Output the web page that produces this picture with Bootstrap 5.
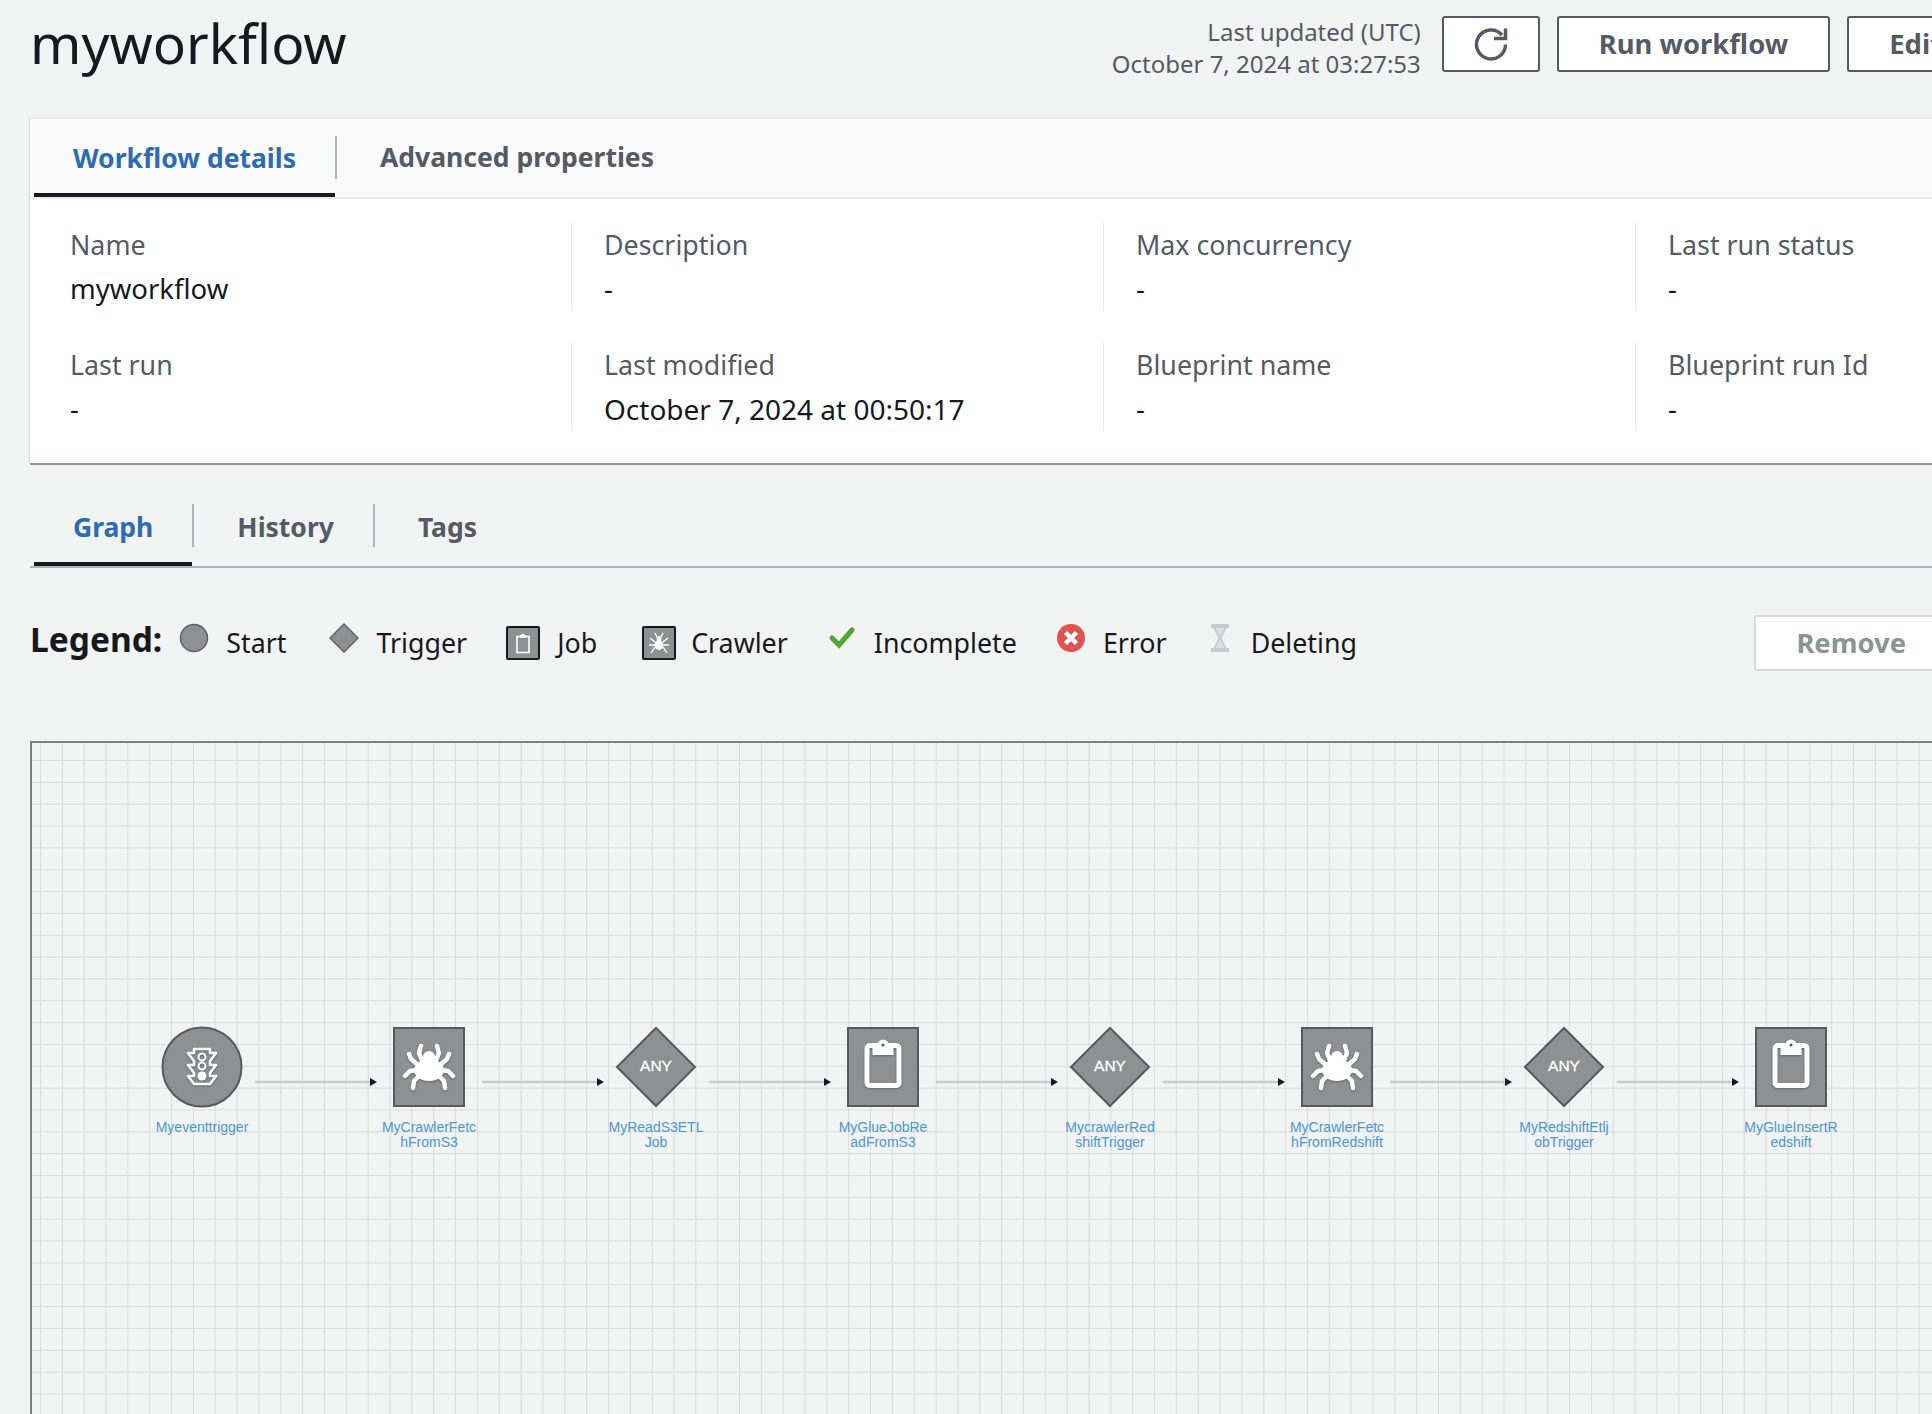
<!doctype html>
<html lang="en">
<head>
<meta charset="utf-8" />
<meta name="viewport" content="width=device-width, initial-scale=1" />
<title>myworkflow - Workflow details</title>
<link href="https://cdn.jsdelivr.net/npm/bootstrap@5.3.0/dist/css/bootstrap.min.css" rel="stylesheet" />
<style>
    html, body {
        height: 100%;
        overflow: hidden;
    }
    body {
        background: #f2f3f3;
        color: #16191f;
        font-family: "Noto Sans", sans-serif;
        font-size: 26.8px;
    }
    .wf-page {
        width: 2200px;
        padding-left: 30px;
    }
    .wf-head {
        width: 1954px;
        height: 118px;
        padding-top: 16px;
    }
    .wf-title {
        font-size: 55px;
        font-weight: 400;
        line-height: 58px;
        margin: -2px 0 0 0;
    }
    .wf-updated {
        color: #545b64;
        font-size: 24px;
        line-height: 32px;
        text-align: right;
        margin-right: 21px;
    }
    .wf-btn {
        height: 56px;
        background: #fff;
        border: 2px solid #545b64;
        border-radius: 3px;
        color: #545b64;
        font-size: 27.4px;
        font-weight: 700;
        padding: 0 40px;
        display: flex;
        align-items: center;
    }
    .wf-btn-next {
        margin-left: 17px;
    }
    .wf-btn-refresh {
        width: 98px;
        justify-content: center;
        padding: 0;
    }
    .wf-btn-off {
        border-color: #d5dbdb;
        color: #879596;
        margin: -4px 0 0 auto;
    }
    .wf-card {
        background: #fff;
        border-top: 1px solid #eaeded;
        box-shadow: 0 2px 0 #8d9a9b, -1px 0 1px #d5dbdb;
        height: 345px;
    }
    .wf-tabs {
        height: 80px;
        background: #fafafa;
        border-bottom: 2px solid #eaeded;
    }
    .wf-tabs-line {
        height: 81px;
        border-bottom: 2px solid #aab7b8;
    }
    .wf-tab {
        height: 100%;
        padding: 0 39px 1px 39px;
        margin-left: 4px;
        display: flex;
        align-items: center;
        color: #545b64;
        font-size: 26.5px;
        font-weight: 700;
    }
    .wf-tab + .wf-tab {
        margin-left: 2px;
        padding-left: 43px;
    }
    .wf-tab.is-active {
        color: #2b6cb4;
        border-bottom: 4px solid #16191f;
        padding-top: 5px;
        padding-bottom: 0;
    }
    .wf-tabs-line .wf-tab {
        padding-top: 4px;
    }
    .wf-tabs-line .wf-tab.is-active {
        padding-top: 7px;
    }
    .wf-tab-sep {
        width: 2px;
        height: 43px;
        background: #aab7b8;
        align-self: flex-start;
        margin-top: 17px;
    }
    .wf-grid {
        display: grid;
        grid-template-columns: repeat(4, 532px);
        row-gap: 32px;
        padding: 24px 0 0 9px;
    }
    .wf-cell {
        height: 88px;
        padding-left: 32px;
        border-left: 1px solid #eaeded;
    }
    .wf-cell.is-first {
        padding-left: 31px;
        border-left: 0;
    }
    .wf-key {
        color: #545b64;
        line-height: 44px;
    }
    .wf-val {
        font-size: 27.5px;
        line-height: 44px;
    }
    .wf-val-date {
        font-size: 28px;
    }
    .wf-legend {
        width: 1918px;
        height: 173px;
        padding-top: 51px;
    }
    .wf-legend-title {
        font-size: 33.5px;
        font-weight: 700;
        line-height: 41px;
        margin: 0 17px 0 0;
    }
    .wf-legend-item {
        line-height: 40px;
        margin: 4px 41px 0 0;
        gap: 17px;
    }
    .wf-li-start { margin-right: 43px; }
    .wf-li-trigger { margin-right: 39px; }
    .wf-li-job { margin-right: 45px; }
    .wf-li-crawler { margin-right: 40px; gap: 15px; }
    .wf-li-incomplete { margin-right: 40px; gap: 18px; }
    .wf-li-error { margin-right: 43px; gap: 18px; }
    .wf-li-deleting { gap: 21px; }
    .wf-legend-icon {
        display: block;
        flex: none;
    }
    .wf-legend-icon.is-up {
        margin-bottom: 10px;
    }
    .wf-canvas {
        position: relative;
        height: 760px;
        border-top: 2px solid #7d8282;
        border-left: 2px solid #7d8282;
        background-color: #f2f3f3;
        background-image:
            linear-gradient(#d9dcdc 1.4px, transparent 1.4px),
            linear-gradient(90deg, #d9dcdc 1.4px, transparent 1.4px);
        background-size: 21.85px 21.85px;
        background-position: 8px 17px;
    }
    .wf-diagram {
        position: absolute;
        left: 0;
        top: 0;
        font-family: "Liberation Sans", Arial, sans-serif;
    }
    .wf-label {
        fill: #4a96d6;
        font-size: 14px;
        text-anchor: middle;
    }
    .wf-shape {
        fill: #8d9192;
        stroke: #545b5b;
        stroke-width: 2;
    }
    .wf-any {
        fill: #fff;
        stroke: #fff;
        stroke-width: .3;
        font-size: 15.5px;
        text-anchor: middle;
    }
    .wf-edge {
        stroke: #c9cccc;
        stroke-width: 2.5;
    }
    .wf-glyph {
        filter: drop-shadow(0 1px 1px rgba(0, 0, 0, .3));
    }
</style>
</head>
<body>
<div class="wf-page">

    <!-- Header -->
    <div class="wf-head d-flex justify-content-between align-items-start">
        <h1 class="wf-title">myworkflow</h1>
        <div class="d-flex align-items-start">
            <div class="wf-updated">Last updated (UTC)<br />October 7, 2024 at 03:27:53</div>
            <button type="button" class="wf-btn wf-btn-refresh" aria-label="Refresh">
                <svg width="36" height="36" viewBox="0 0 36 36" fill="none">
                    <path d="M29 9A14.500 14.500 0 1 0 32.500 18.500" stroke="#545b64" stroke-width="3.500" />
                    <path d="M32.500 2.500V12.500H21" stroke="#545b64" stroke-width="3.500" />
                </svg>
            </button>
            <button type="button" class="wf-btn wf-btn-next">Run workflow</button>
            <button type="button" class="wf-btn wf-btn-next">Edit</button>
        </div>
    </div>

    <!-- Workflow details -->
    <div class="wf-card">
        <div class="wf-tabs d-flex">
            <div class="wf-tab is-active">Workflow details</div>
            <div class="wf-tab-sep"></div>
            <div class="wf-tab">Advanced properties</div>
        </div>
        <div class="wf-grid">
            <div class="wf-cell is-first"><div class="wf-key">Name</div><div class="wf-val">myworkflow</div></div>
            <div class="wf-cell"><div class="wf-key">Description</div><div class="wf-val">-</div></div>
            <div class="wf-cell"><div class="wf-key">Max concurrency</div><div class="wf-val">-</div></div>
            <div class="wf-cell"><div class="wf-key">Last run status</div><div class="wf-val">-</div></div>
            <div class="wf-cell is-first"><div class="wf-key">Last run</div><div class="wf-val">-</div></div>
            <div class="wf-cell"><div class="wf-key">Last modified</div><div class="wf-val wf-val-date">October 7, 2024 at 00:50:17</div></div>
            <div class="wf-cell"><div class="wf-key">Blueprint name</div><div class="wf-val">-</div></div>
            <div class="wf-cell"><div class="wf-key">Blueprint run Id</div><div class="wf-val">-</div></div>
        </div>
    </div>

    <!-- Graph tabs -->
    <div class="wf-tabs-line d-flex mt-4">
        <div class="wf-tab is-active">Graph</div>
        <div class="wf-tab-sep"></div>
        <div class="wf-tab">History</div>
        <div class="wf-tab-sep"></div>
        <div class="wf-tab">Tags</div>
    </div>

    <!-- Legend -->
    <div class="wf-legend d-flex align-items-start">
        <div class="wf-legend-title">Legend:</div>
        <div class="wf-legend-item wf-li-start d-flex align-items-center">
            <svg class="wf-legend-icon is-up" width="30" height="30" viewBox="0 0 30 30"><circle cx="15" cy="15" r="13.500" fill="#8d9192" stroke="#5f6566" stroke-width="1.500" /></svg>
            <span>Start</span>
        </div>
        <div class="wf-legend-item wf-li-trigger d-flex align-items-center">
            <svg class="wf-legend-icon is-up" width="30" height="30" viewBox="0 0 30 30"><path d="M15 1 29 15 15 29 1 15Z" fill="#8d9192" stroke="#5f6566" stroke-width="1.500" /></svg>
            <span>Trigger</span>
        </div>
        <div class="wf-legend-item wf-li-job d-flex align-items-center">
            <svg class="wf-legend-icon" width="34" height="34" viewBox="0 0 34 34">
                <rect x="1" y="1" width="32" height="32" rx="1" fill="#8d9192" stroke="#16191f" stroke-width="2" />
                <rect x="11" y="10.500" width="12" height="16" fill="none" stroke="#fff" stroke-width="1.600" />
                <path d="M14 12V9H15.500A1.500 1.500 0 0 1 18.500 9H20V12Z" fill="#fff" />
            </svg>
            <span>Job</span>
        </div>
        <div class="wf-legend-item wf-li-crawler d-flex align-items-center">
            <svg class="wf-legend-icon" width="34" height="34" viewBox="0 0 34 34">
                <rect x="1" y="1" width="32" height="32" rx="1" fill="#8d9192" stroke="#16191f" stroke-width="2" />
                <ellipse cx="17" cy="19" rx="4.500" ry="5" fill="#fff" />
                <circle cx="17" cy="12.500" r="2.500" fill="#fff" />
                <path d="M13 16 8 12M13 19 7 19M13 21 9 27M21 16 26 12M21 19 27 19M21 21 25 27M15 11 13 7M19 11 21 7" stroke="#fff" stroke-width="1.300" fill="none" />
            </svg>
            <span>Crawler</span>
        </div>
        <div class="wf-legend-item wf-li-incomplete d-flex align-items-center">
            <svg class="wf-legend-icon is-up" width="28" height="24" viewBox="0 0 28 24"><path d="M4 12 11 19 24 4" fill="none" stroke="#4ea72e" stroke-width="5" stroke-linecap="round" /></svg>
            <span>Incomplete</span>
        </div>
        <div class="wf-legend-item wf-li-error d-flex align-items-center">
            <svg class="wf-legend-icon is-up" width="28" height="28" viewBox="0 0 28 28">
                <circle cx="14" cy="14" r="14" fill="#df5350" />
                <path d="M8.500 8.500 19.500 19.500M19.500 8.500 8.500 19.500" stroke="#fff" stroke-width="4.500" />
            </svg>
            <span>Error</span>
        </div>
        <div class="wf-legend-item wf-li-deleting d-flex align-items-center">
            <svg class="wf-legend-icon is-up" width="20" height="28" viewBox="0 0 20 28">
                <path d="M1 2H19M1 26H19" stroke="#c9cccc" stroke-width="4" />
                <path d="M4 3 9 13V15L4 25H16L11 15V13L16 3Z" fill="#dcdfdf" stroke="#c9cccc" stroke-width="2" />
            </svg>
            <span>Deleting</span>
        </div>
        <button type="button" class="wf-btn wf-btn-off">Remove</button>
    </div>

    <!-- Graph canvas, nodes sit at their diagram coordinates -->
    <div class="wf-canvas">
        <svg class="wf-diagram" width="1900" height="700" viewBox="32 743 1900 700">
            <defs>
                <marker id="wf-arrow" markerUnits="userSpaceOnUse" markerWidth="8" markerHeight="8" refX="0" refY="4" orient="auto">
                    <path d="M0 0 7 4 0 8Z" fill="#16191f" />
                </marker>
                <g id="wf-spider">
                    <ellipse cx="0" cy="3" rx="15" ry="11" fill="#fff" />
                    <circle cx="0" cy="-10" r="6" fill="#fff" />
                    <path d="M-7 -7-10 -14-8 -21M7 -7 10 -14 8 -21M-10 -1-18 -8-20 -13M10 -1 18 -8 20 -13M-12 3-19 4-24 9M12 3 19 4 24 9M-10 9-15 14-16 21M10 9 15 14 16 21" fill="none" stroke="#fff" stroke-width="4.500" stroke-linecap="round" stroke-linejoin="round" />
                </g>
                <g id="wf-board">
                    <rect x="-16" y="-21.500" width="32" height="40" rx="3" fill="none" stroke="#fff" stroke-width="5" />
                    <path d="M-10.500 -12V-22H-5.500A5.500 5.500 0 0 1 5.500 -22H10.500V-12Z" fill="#fff" />
                    <circle cx="0" cy="-22" r="1.500" fill="#545b5b" />
                </g>
                <g id="wf-light">
                    <path d="M-8 -18H8V-14H14L8 -6V-2H14L8 6V9H14L8 17H-8L-14 9H-8V6L-14 -2H-8V-6L-14 -14H-8Z" fill="none" stroke="#fff" stroke-width="2.600" stroke-linejoin="round" />
                    <circle cx="0" cy="-10" r="3.500" fill="none" stroke="#fff" stroke-width="2" />
                    <circle cx="0" cy="-1" r="3.500" fill="none" stroke="#fff" stroke-width="2" />
                    <circle cx="0" cy="9" r="4.500" fill="#fff" />
                </g>
            </defs>

            <line class="wf-edge" x1="255" y1="1082" x2="370" y2="1082" marker-end="url(#wf-arrow)" />
            <line class="wf-edge" x1="482" y1="1082" x2="597" y2="1082" marker-end="url(#wf-arrow)" />
            <line class="wf-edge" x1="709" y1="1082" x2="824" y2="1082" marker-end="url(#wf-arrow)" />
            <line class="wf-edge" x1="936" y1="1082" x2="1051" y2="1082" marker-end="url(#wf-arrow)" />
            <line class="wf-edge" x1="1163" y1="1082" x2="1278" y2="1082" marker-end="url(#wf-arrow)" />
            <line class="wf-edge" x1="1390" y1="1082" x2="1505" y2="1082" marker-end="url(#wf-arrow)" />
            <line class="wf-edge" x1="1617" y1="1082" x2="1732" y2="1082" marker-end="url(#wf-arrow)" />

            <circle class="wf-shape" cx="202" cy="1067" r="39.500" />
            <use class="wf-glyph" href="#wf-light" x="202" y="1067" />
            <text class="wf-label" x="202" y="1132">Myeventtrigger</text>

            <rect class="wf-shape" x="394" y="1028" width="70" height="78" />
            <use class="wf-glyph" href="#wf-spider" x="429" y="1067" />
            <text class="wf-label" x="429" y="1132">MyCrawlerFetc</text>
            <text class="wf-label" x="429" y="1147">hFromS3</text>

            <path class="wf-shape" d="M656 1028 695 1067 656 1106 617 1067Z" />
            <text class="wf-any" x="656" y="1071">ANY</text>
            <text class="wf-label" x="656" y="1132">MyReadS3ETL</text>
            <text class="wf-label" x="656" y="1147">Job</text>

            <rect class="wf-shape" x="848" y="1028" width="70" height="78" />
            <use class="wf-glyph" href="#wf-board" x="883" y="1067" />
            <text class="wf-label" x="883" y="1132">MyGlueJobRe</text>
            <text class="wf-label" x="883" y="1147">adFromS3</text>

            <path class="wf-shape" d="M1110 1028 1149 1067 1110 1106 1071 1067Z" />
            <text class="wf-any" x="1110" y="1071">ANY</text>
            <text class="wf-label" x="1110" y="1132">MycrawlerRed</text>
            <text class="wf-label" x="1110" y="1147">shiftTrigger</text>

            <rect class="wf-shape" x="1302" y="1028" width="70" height="78" />
            <use class="wf-glyph" href="#wf-spider" x="1337" y="1067" />
            <text class="wf-label" x="1337" y="1132">MyCrawlerFetc</text>
            <text class="wf-label" x="1337" y="1147">hFromRedshift</text>

            <path class="wf-shape" d="M1564 1028 1603 1067 1564 1106 1525 1067Z" />
            <text class="wf-any" x="1564" y="1071">ANY</text>
            <text class="wf-label" x="1564" y="1132">MyRedshiftEtlj</text>
            <text class="wf-label" x="1564" y="1147">obTrigger</text>

            <rect class="wf-shape" x="1756" y="1028" width="70" height="78" />
            <use class="wf-glyph" href="#wf-board" x="1791" y="1067" />
            <text class="wf-label" x="1791" y="1132">MyGlueInsertR</text>
            <text class="wf-label" x="1791" y="1147">edshift</text>
        </svg>
    </div>
</div>
<script src="https://cdn.jsdelivr.net/npm/bootstrap@5.3.0/dist/js/bootstrap.bundle.min.js"></script>
</body>
</html>
